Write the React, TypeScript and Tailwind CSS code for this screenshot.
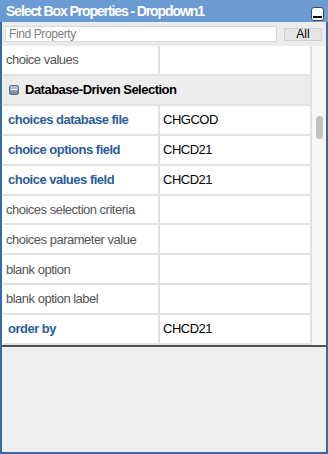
import React from "react";

type Row = { label: string; value?: string; set?: boolean };

const topRows: Row[] = [{ label: "choice values" }];

const dbRows: Row[] = [
  { label: "choices database file", value: "CHGCOD", set: true },
  { label: "choice options field", value: "CHCD21", set: true },
  { label: "choice values field", value: "CHCD21", set: true },
  { label: "choices selection criteria" },
  { label: "choices parameter value" },
  { label: "blank option" },
  { label: "blank option label" },
  { label: "order by", value: "CHCD21", set: true },
];

function PropRow({ row }: { row: Row }) {
  return (
    <div className="flex h-[30px] border-b-2 border-[#e1e1e1] bg-white tracking-[-0.5px]">
      <div
        className={
          row.set
            ? "w-[157px] shrink-0 flex items-center pl-[5px] border-r-2 border-[#e1e1e1] text-[13px] font-bold text-[#2d5c9a]"
            : "w-[157px] shrink-0 flex items-center pl-[3px] border-r-2 border-[#e1e1e1] text-[13px] text-[#555555]"
        }
      >
        {row.label}
      </div>
      <div className="flex-1 flex items-center pl-[3px] text-[13px] text-black">
        {row.value}
      </div>
    </div>
  );
}

export default function App() {
  return (
    <div
      className="w-[328px] h-[454px] flex flex-col bg-[#3a6aa5] overflow-hidden"
      style={{ fontFamily: '"Liberation Sans", Arial, sans-serif' }}
    >
      {/* title bar */}
      <div className="h-[22px] shrink-0 flex items-center justify-between pl-[6px] pr-[4px] bg-[#6b9bd2]">
        <span className="text-[14px] font-bold text-white leading-none tracking-[-1.1px]">
          Select Box Properties - Dropdown1
        </span>
        <div className="w-[13px] h-[14px] mt-[5px] rounded-[3px] bg-white border border-[#3a4a66] flex items-end justify-center pb-[2px]">
          <div className="w-[9px] h-[2px] bg-black" />
        </div>
      </div>

      <div className="flex-1 flex flex-col mx-[2px] mb-[2px] min-h-0">
        {/* search row */}
        <div className="h-[24px] shrink-0 flex items-center gap-[6px] pl-[3px] pr-[4px] bg-[#ececec]">
          <div className="w-[272px] h-[16px] bg-white border border-[#d6d6d6] flex items-center pl-[3px] text-[12px] tracking-[-0.4px] text-[#808080]">
            Find Property
          </div>
          <div className="w-[38px] h-[13px] ml-[1px] bg-[#e5e5e5] border border-[#cfcfcf] flex items-center justify-center text-[12px] text-black leading-none">
            All
          </div>
        </div>

        {/* grid + scrollbar */}
        <div className="h-[299px] shrink-0 flex bg-white">
          <div className="w-[310px] flex flex-col pl-[1px] border-r-2 border-[#e1e1e1]">
            {topRows.map((r) => (
              <PropRow key={r.label} row={r} />
            ))}
            <div className="h-[30px] flex items-center gap-[6px] pl-[6px] bg-[#ececec] border-b-2 border-[#e1e1e1]">
              <div className="w-[10px] h-[10px] rounded-[2px] bg-gradient-to-b from-[#b9c6d8] to-[#6f84a3] border border-[#5a6f8f] flex items-center justify-center">
                <div className="w-[6px] h-[1px] bg-white" />
              </div>
              <span className="text-[13px] font-bold text-black tracking-[-0.5px]">
                Database-Driven Selection
              </span>
            </div>
            {dbRows.map((r) => (
              <PropRow key={r.label} row={r} />
            ))}
          </div>
          <div className="flex-1 bg-[#f7f7f7] pt-[70px] flex justify-center">
            <div className="w-[7px] h-[23px] rounded-full bg-[#c0c0c0]" />
          </div>
        </div>

        {/* bottom panel */}
        <div className="flex-1 bg-[#eeeeee] border-t-2 border-[#4f4f4f]" />
      </div>
    </div>
  );
}
